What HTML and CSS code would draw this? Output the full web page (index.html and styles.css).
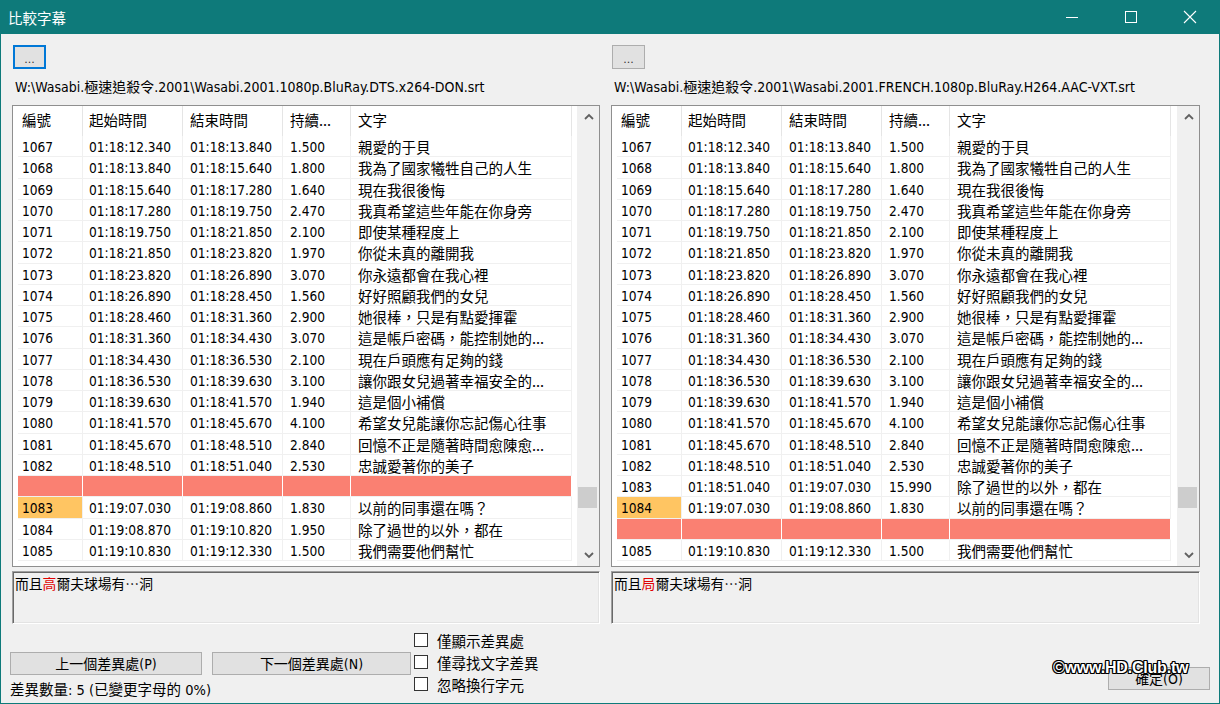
FILE: index.html
```html
<!DOCTYPE html>
<html>
<head>
<meta charset="utf-8">
<link rel="stylesheet" href="styles.css">
</head>
<body>
<div class="win">
  <div class="titlebar">
    <span class="title">比較字幕</span>
    <div class="ctrls">
      <span class="ctl"><svg width="14" height="14" viewBox="0 0 14 14"><line x1="1" y1="7.5" x2="13" y2="7.5" stroke="#fff" stroke-width="1"/></svg></span>
      <span class="ctl"><svg width="14" height="14" viewBox="0 0 14 14"><rect x="1.5" y="1.5" width="11" height="11" fill="none" stroke="#fff" stroke-width="1"/></svg></span>
      <span class="ctl"><svg width="14" height="14" viewBox="0 0 14 14"><path d="M1 1L13 13M13 1L1 13" stroke="#fff" stroke-width="1.1"/></svg></span>
    </div>
  </div>
  <div class="client">
    <div class="panes">
      <div class="pane">
        <button class="dots focus">...</button>
        <div class="path">W:\Wasabi.極速追殺令.2001\Wasabi.2001.1080p.BluRay.DTS.x264-DON.srt</div>
        <div class="list">
          <div class="lmain">
            <div class="hdr"><span class="h1">編號</span><span class="h2">起始時間</span><span class="h3">結束時間</span><span class="h4">持續...</span><span class="h5">文字</span></div>
            <div class="row"><span class="c1">1067</span><span class="c2">01:18:12.340</span><span class="c3">01:18:13.840</span><span class="c4">1.500</span><span class="c5">親愛的于貝</span></div>
            <div class="row"><span class="c1">1068</span><span class="c2">01:18:13.840</span><span class="c3">01:18:15.640</span><span class="c4">1.800</span><span class="c5">我為了國家犧牲自己的人生</span></div>
            <div class="row"><span class="c1">1069</span><span class="c2">01:18:15.640</span><span class="c3">01:18:17.280</span><span class="c4">1.640</span><span class="c5">現在我很後悔</span></div>
            <div class="row"><span class="c1">1070</span><span class="c2">01:18:17.280</span><span class="c3">01:18:19.750</span><span class="c4">2.470</span><span class="c5">我真希望這些年能在你身旁</span></div>
            <div class="row"><span class="c1">1071</span><span class="c2">01:18:19.750</span><span class="c3">01:18:21.850</span><span class="c4">2.100</span><span class="c5">即使某種程度上</span></div>
            <div class="row"><span class="c1">1072</span><span class="c2">01:18:21.850</span><span class="c3">01:18:23.820</span><span class="c4">1.970</span><span class="c5">你從未真的離開我</span></div>
            <div class="row"><span class="c1">1073</span><span class="c2">01:18:23.820</span><span class="c3">01:18:26.890</span><span class="c4">3.070</span><span class="c5">你永遠都會在我心裡</span></div>
            <div class="row"><span class="c1">1074</span><span class="c2">01:18:26.890</span><span class="c3">01:18:28.450</span><span class="c4">1.560</span><span class="c5">好好照顧我們的女兒</span></div>
            <div class="row"><span class="c1">1075</span><span class="c2">01:18:28.460</span><span class="c3">01:18:31.360</span><span class="c4">2.900</span><span class="c5">她很棒，只是有點愛揮霍</span></div>
            <div class="row"><span class="c1">1076</span><span class="c2">01:18:31.360</span><span class="c3">01:18:34.430</span><span class="c4">3.070</span><span class="c5">這是帳戶密碼，能控制她的...</span></div>
            <div class="row"><span class="c1">1077</span><span class="c2">01:18:34.430</span><span class="c3">01:18:36.530</span><span class="c4">2.100</span><span class="c5">現在戶頭應有足夠的錢</span></div>
            <div class="row"><span class="c1">1078</span><span class="c2">01:18:36.530</span><span class="c3">01:18:39.630</span><span class="c4">3.100</span><span class="c5">讓你跟女兒過著幸福安全的...</span></div>
            <div class="row"><span class="c1">1079</span><span class="c2">01:18:39.630</span><span class="c3">01:18:41.570</span><span class="c4">1.940</span><span class="c5">這是個小補償</span></div>
            <div class="row"><span class="c1">1080</span><span class="c2">01:18:41.570</span><span class="c3">01:18:45.670</span><span class="c4">4.100</span><span class="c5">希望女兒能讓你忘記傷心往事</span></div>
            <div class="row"><span class="c1">1081</span><span class="c2">01:18:45.670</span><span class="c3">01:18:48.510</span><span class="c4">2.840</span><span class="c5">回憶不正是隨著時間愈陳愈...</span></div>
            <div class="row"><span class="c1">1082</span><span class="c2">01:18:48.510</span><span class="c3">01:18:51.040</span><span class="c4">2.530</span><span class="c5">忠誠愛著你的美子</span></div>
            <div class="row miss"><span class="c1"></span><span class="c2"></span><span class="c3"></span><span class="c4"></span><span class="c5"></span></div>
            <div class="row"><span class="c1 diff">1083</span><span class="c2">01:19:07.030</span><span class="c3">01:19:08.860</span><span class="c4">1.830</span><span class="c5">以前的同事還在嗎？</span></div>
            <div class="row"><span class="c1">1084</span><span class="c2">01:19:08.870</span><span class="c3">01:19:10.820</span><span class="c4">1.950</span><span class="c5">除了過世的以外，都在</span></div>
            <div class="row"><span class="c1">1085</span><span class="c2">01:19:10.830</span><span class="c3">01:19:12.330</span><span class="c4">1.500</span><span class="c5">我們需要他們幫忙</span></div>
          </div>
          <div class="vs">
            <div class="arr"><svg width="10" height="7" viewBox="0 0 10 7"><polyline points="1,6 5,2 9,6" fill="none" stroke="#606060" stroke-width="1.8"/></svg></div>
            <div class="track"><div class="thumb"></div></div>
            <div class="arr"><svg width="10" height="7" viewBox="0 0 10 7"><polyline points="1,1 5,5 9,1" fill="none" stroke="#606060" stroke-width="1.8"/></svg></div>
          </div>
        </div>
        <div class="memo">而且<span class="red">高</span>爾夫球場有⋯洞</div>
      </div>

      <div class="pane">
        <button class="dots">...</button>
        <div class="path">W:\Wasabi.極速追殺令.2001\Wasabi.2001.FRENCH.1080p.BluRay.H264.AAC-VXT.srt</div>
        <div class="list">
          <div class="lmain">
            <div class="hdr"><span class="h1">編號</span><span class="h2">起始時間</span><span class="h3">結束時間</span><span class="h4">持續...</span><span class="h5">文字</span></div>
            <div class="row"><span class="c1">1067</span><span class="c2">01:18:12.340</span><span class="c3">01:18:13.840</span><span class="c4">1.500</span><span class="c5">親愛的于貝</span></div>
            <div class="row"><span class="c1">1068</span><span class="c2">01:18:13.840</span><span class="c3">01:18:15.640</span><span class="c4">1.800</span><span class="c5">我為了國家犧牲自己的人生</span></div>
            <div class="row"><span class="c1">1069</span><span class="c2">01:18:15.640</span><span class="c3">01:18:17.280</span><span class="c4">1.640</span><span class="c5">現在我很後悔</span></div>
            <div class="row"><span class="c1">1070</span><span class="c2">01:18:17.280</span><span class="c3">01:18:19.750</span><span class="c4">2.470</span><span class="c5">我真希望這些年能在你身旁</span></div>
            <div class="row"><span class="c1">1071</span><span class="c2">01:18:19.750</span><span class="c3">01:18:21.850</span><span class="c4">2.100</span><span class="c5">即使某種程度上</span></div>
            <div class="row"><span class="c1">1072</span><span class="c2">01:18:21.850</span><span class="c3">01:18:23.820</span><span class="c4">1.970</span><span class="c5">你從未真的離開我</span></div>
            <div class="row"><span class="c1">1073</span><span class="c2">01:18:23.820</span><span class="c3">01:18:26.890</span><span class="c4">3.070</span><span class="c5">你永遠都會在我心裡</span></div>
            <div class="row"><span class="c1">1074</span><span class="c2">01:18:26.890</span><span class="c3">01:18:28.450</span><span class="c4">1.560</span><span class="c5">好好照顧我們的女兒</span></div>
            <div class="row"><span class="c1">1075</span><span class="c2">01:18:28.460</span><span class="c3">01:18:31.360</span><span class="c4">2.900</span><span class="c5">她很棒，只是有點愛揮霍</span></div>
            <div class="row"><span class="c1">1076</span><span class="c2">01:18:31.360</span><span class="c3">01:18:34.430</span><span class="c4">3.070</span><span class="c5">這是帳戶密碼，能控制她的...</span></div>
            <div class="row"><span class="c1">1077</span><span class="c2">01:18:34.430</span><span class="c3">01:18:36.530</span><span class="c4">2.100</span><span class="c5">現在戶頭應有足夠的錢</span></div>
            <div class="row"><span class="c1">1078</span><span class="c2">01:18:36.530</span><span class="c3">01:18:39.630</span><span class="c4">3.100</span><span class="c5">讓你跟女兒過著幸福安全的...</span></div>
            <div class="row"><span class="c1">1079</span><span class="c2">01:18:39.630</span><span class="c3">01:18:41.570</span><span class="c4">1.940</span><span class="c5">這是個小補償</span></div>
            <div class="row"><span class="c1">1080</span><span class="c2">01:18:41.570</span><span class="c3">01:18:45.670</span><span class="c4">4.100</span><span class="c5">希望女兒能讓你忘記傷心往事</span></div>
            <div class="row"><span class="c1">1081</span><span class="c2">01:18:45.670</span><span class="c3">01:18:48.510</span><span class="c4">2.840</span><span class="c5">回憶不正是隨著時間愈陳愈...</span></div>
            <div class="row"><span class="c1">1082</span><span class="c2">01:18:48.510</span><span class="c3">01:18:51.040</span><span class="c4">2.530</span><span class="c5">忠誠愛著你的美子</span></div>
            <div class="row"><span class="c1">1083</span><span class="c2">01:18:51.040</span><span class="c3">01:19:07.030</span><span class="c4">15.990</span><span class="c5">除了過世的以外，都在</span></div>
            <div class="row"><span class="c1 diff">1084</span><span class="c2">01:19:07.030</span><span class="c3">01:19:08.860</span><span class="c4">1.830</span><span class="c5">以前的同事還在嗎？</span></div>
            <div class="row miss"><span class="c1"></span><span class="c2"></span><span class="c3"></span><span class="c4"></span><span class="c5"></span></div>
            <div class="row"><span class="c1">1085</span><span class="c2">01:19:10.830</span><span class="c3">01:19:12.330</span><span class="c4">1.500</span><span class="c5">我們需要他們幫忙</span></div>
          </div>
          <div class="vs">
            <div class="arr"><svg width="10" height="7" viewBox="0 0 10 7"><polyline points="1,6 5,2 9,6" fill="none" stroke="#606060" stroke-width="1.8"/></svg></div>
            <div class="track"><div class="thumb"></div></div>
            <div class="arr"><svg width="10" height="7" viewBox="0 0 10 7"><polyline points="1,1 5,5 9,1" fill="none" stroke="#606060" stroke-width="1.8"/></svg></div>
          </div>
        </div>
        <div class="memo">而且<span class="red">局</span>爾夫球場有⋯洞</div>
      </div>
    </div>

    <div class="bottom">
      <div class="navcol">
        <div class="navbtns">
          <button class="btn prev">上一個差異處(P)</button>
          <button class="btn next">下一個差異處(N)</button>
        </div>
        <div class="status">差異數量: 5 (已變更字母的 0%)</div>
      </div>
      <div class="checks">
        <label class="chk"><span class="box"></span>僅顯示差異處</label>
        <label class="chk"><span class="box"></span>僅尋找文字差異</label>
        <label class="chk"><span class="box"></span>忽略換行字元</label>
      </div>
      <button class="btn ok">確定(O)</button>
    </div>
  </div>
</div>
<div class="wm">©www.HD.Club.tw</div>
</body>
</html>
```

FILE: styles.css
```css
* { box-sizing: border-box; margin: 0; padding: 0; }
html, body { width: 1220px; height: 704px; overflow: hidden; }
body {
  background: #0e7a7a;
  font-family: "DejaVu Sans Condensed", "DejaVu Sans", "Noto Sans CJK TC", sans-serif;
  color: #000;
  position: relative;
}
.win { display: flex; flex-direction: column; height: 704px; }

.titlebar { height: 34px; display: flex; align-items: center; color: #fff; flex: none; }
.title { padding-left: 8px; font-family: "Noto Sans CJK TC", sans-serif; font-size: 14.5px; flex: 1; }
.ctrls { display: flex; padding-right: 1px; height: 34px; }
.ctl { width: 59px; height: 34px; display: flex; align-items: center; justify-content: center; }

.client { flex: 1; margin: 0 1px 1px; background: #f0f0f0; display: flex; flex-direction: column; }
.panes { display: flex; gap: 11px; padding: 11px 0 0 11px; }
.pane { width: 588px; display: flex; flex-direction: column; }
.pane + .pane { width: 589px; }

.dots {
  width: 33px; height: 24px; margin-left: 1px;
  background: #e1e1e1; border: 1px solid #adadad;
  font-family: "DejaVu Sans", sans-serif; font-size: 11px; color: #333;
  padding-top: 6px; line-height: 12px;
}
.dots.focus { border: 2px solid #0078d7; }

.path {
  height: 36px; line-height: 36px; padding-left: 3px;
  font-size: 14px; white-space: nowrap; overflow: hidden;
}

.list { height: 462px; border: 1px solid #8f8f8f; background: #fff; display: flex; }
.lmain { flex: 1; overflow: hidden; }
.hdr { height: 30px; display: flex; font-family: "Noto Sans CJK TC", sans-serif; font-size: 14.5px; }
.hdr span { display: flex; align-items: center; padding-bottom: 4px; border-right: 1px solid #e5e5e5; flex: none; white-space: nowrap; }
.h1 { width: 70px; padding-left: 9px; }
.h2 { width: 100px; padding-left: 6px; }
.h3 { width: 100px; padding-left: 7px; }
.h4 { width: 68px; padding-left: 7px; }
.h5 { width: 221px; padding-left: 7px; }

.row { display: flex; height: 21.25px; padding-left: 5px; }
.row span {
  flex: none; height: 21.25px; line-height: 20.25px; padding-top: 1px;
  border-right: 1px solid #f0f0f0; border-bottom: 1px solid #f0f0f0;
  white-space: nowrap; overflow: hidden; font-size: 13.6px;
}
.c1 { width: 65px; padding-left: 4px; }
.c2 { width: 100px; padding-left: 6px; }
.c3 { width: 100px; padding-left: 7px; }
.c4 { width: 68px; padding-left: 7px; }
.row .c5 { width: 221px; padding-left: 7px; font-family: "Noto Sans CJK TC", sans-serif; font-size: 14.5px; }
.row.miss span { background: #fa8072; border-right-color: #fff; }
.row .diff { background: #ffc562; }

.vs { width: 22px; background: #f0f0f0; display: flex; flex-direction: column; flex: none; }
.arr { height: 21px; display: flex; align-items: center; justify-content: center; padding-left: 1px; }
.track { flex: 1; }
.thumb { margin: 360px 2px 0 1px; height: 21px; background: #cdcdcd; }

.memo {
  margin-top: 4px; height: 53px;
  border-style: solid; border-width: 1px;
  border-color: #a0a0a0 #fff #fff #a0a0a0;
  box-shadow: inset 1px 1px 0 #696969, inset -1px -1px 0 #e3e3e3;
  padding: 1px 0 0 2px;
  font-family: "Noto Sans CJK TC", sans-serif; font-size: 13.8px; line-height: 20px;
}
.red { color: #e00000; }

.bottom { flex: 1; display: flex; padding: 0 9px 0 9px; }
.navcol { display: flex; flex-direction: column; padding-top: 28px; }
.navbtns { display: flex; gap: 10px; }
.btn {
  height: 23px; background: #e1e1e1; border: 1px solid #adadad;
  font-family: "DejaVu Sans Condensed", "DejaVu Sans", "Noto Sans CJK TC", sans-serif;
  font-size: 14px; color: #000; line-height: 20px;
}
.prev { width: 192px; }
.next { width: 199px; }
.status { padding-top: 2px; line-height: 26px; font-size: 14.5px; white-space: nowrap; }

.checks { display: flex; flex-direction: column; padding-top: 5px; margin-left: 3px; }
.chk { height: 22px; display: flex; align-items: center; gap: 9px; font-family: "Noto Sans CJK TC", sans-serif; font-size: 14.5px; white-space: nowrap; }
.box { width: 14px; height: 14px; border: 1px solid #333; background: #fff; flex: none; }

.ok { width: 102px; margin-left: auto; margin-top: 43px; }

.wm {
  position: absolute; left: 1053px; top: 659px;
  font-family: "Liberation Sans", Arial, sans-serif; font-weight: bold; font-size: 16px;
  letter-spacing: -0.2px; color: #fff;
  text-shadow: -1px -1px 0 #000, 1px -1px 0 #000, -1px 1px 0 #000, 1px 1px 0 #000,
               0 -1px 0 #000, 0 1px 0 #000, -1px 0 0 #000, 1px 0 0 #000;
}
```
